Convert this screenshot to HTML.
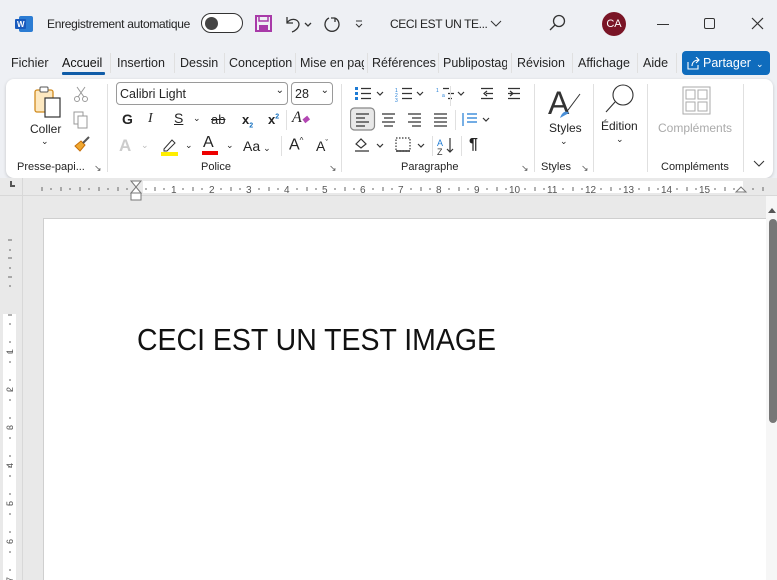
<!DOCTYPE html>
<html><head><meta charset="utf-8"><style>
*{margin:0;padding:0;box-sizing:border-box}
body{width:777px;height:580px;overflow:hidden;background:#eef0f4;font-family:"Liberation Sans",sans-serif;color:#242424;position:relative}
.a{position:absolute;white-space:nowrap}
.t{font-size:12px}
.tab{position:absolute;top:56px;font-size:12.5px;color:#242424;white-space:nowrap}
.sep{position:absolute;width:1px;background:#e0e0e0}
.lbl{position:absolute;top:161px;font-size:11px;color:#242424;white-space:nowrap}
.ic{position:absolute}
</style></head><body>
<!-- title bar -->
<svg class="ic" style="left:15px;top:16px" width="18" height="16"><rect x="4" y="0" width="14" height="16" rx="2" fill="#2b7cd3"/><rect x="0" y="3" width="11" height="10" rx="1" fill="#185abd"/><text x="2" y="11" font-size="8" font-weight="bold" fill="#fff" font-family="Liberation Sans">W</text></svg>
<div class="a t" style="left:47px;top:17px;letter-spacing:-0.3px">Enregistrement automatique</div>
<div class="a" style="left:201px;top:13px;width:42px;height:20px;border:1.5px solid #333;border-radius:10px;background:#fff"><div style="position:absolute;left:3px;top:2.5px;width:13px;height:13px;border-radius:50%;background:#444"></div></div>
<svg class="ic" style="left:255px;top:15px" width="17" height="17"><rect x="1" y="1" width="15" height="15" fill="none" stroke="#a83aa8" stroke-width="2"/><rect x="4" y="1" width="9" height="5" fill="none" stroke="#a83aa8" stroke-width="1.5"/><rect x="4" y="10" width="9" height="6" fill="#a83aa8"/></svg>
<svg class="ic" style="left:283px;top:14px" width="60" height="20" fill="none" stroke="#333" stroke-width="1.3"><path d="M4 3v6h6M4 9c3-5 11-5 12 1c0 4-4 7-7 8"/><path d="M22 9l3 3l3-3"/><path d="M52 4a7 7 0 1 1-6 0M52 4v4M52 4h-4"/></svg>
<svg class="ic" style="left:354px;top:18px" width="10" height="10" stroke="#333" fill="none"><path d="M2 3h6M2 6l3 3l3-3"/></svg>
<div class="a t" style="left:390px;top:17px;letter-spacing:-0.4px">CECI EST UN TE...</div>
<svg class="ic" style="left:490px;top:18px" width="12" height="10" stroke="#333" fill="none"><path d="M1 3l5 5l5-5"/></svg>
<svg class="ic" style="left:549px;top:14px" width="17" height="17" stroke="#333" fill="none" stroke-width="1.3"><circle cx="10" cy="7" r="5.5"/><path d="M6 11l-5 5"/></svg>
<div class="a" style="left:602px;top:12px;width:24px;height:24px;border-radius:50%;background:#7a1526;color:#fff;font-size:11px;text-align:center;line-height:24px">CA</div>
<div class="a" style="left:657px;top:24px;width:12px;height:1px;background:#333"></div>
<div class="a" style="left:704px;top:18px;width:11px;height:11px;border:1.2px solid #333;border-radius:2px"></div>
<svg class="ic" style="left:751px;top:17px" width="13" height="13" stroke="#333" stroke-width="1.2"><path d="M1 1l11 11M12 1l-11 11"/></svg>
<!-- tabs -->
<div class="tab" style="left:11px">Fichier</div>
<div class="tab" style="left:62px;color:#111">Accueil</div>
<div class="a" style="left:62px;top:72px;width:43px;height:3px;background:#0f5ca8;border-radius:1px"></div>
<div class="tab" style="left:117px">Insertion</div>
<div class="tab" style="left:180px">Dessin</div>
<div class="tab" style="left:229px;width:63px;overflow:hidden">Conception</div>
<div class="tab" style="left:300px;width:64px;overflow:hidden">Mise en page</div>
<div class="tab" style="left:372px;width:64px;overflow:hidden">Références</div>
<div class="tab" style="left:443px;width:64px;overflow:hidden">Publipostage</div>
<div class="tab" style="left:517px">Révision</div>
<div class="tab" style="left:578px">Affichage</div>
<div class="tab" style="left:643px">Aide</div>
<div class="sep" style="left:110px;top:53px;height:20px"></div><div class="sep" style="left:174px;top:53px;height:20px"></div><div class="sep" style="left:224px;top:53px;height:20px"></div><div class="sep" style="left:295px;top:53px;height:20px"></div><div class="sep" style="left:367px;top:53px;height:20px"></div><div class="sep" style="left:438px;top:53px;height:20px"></div><div class="sep" style="left:511px;top:53px;height:20px"></div><div class="sep" style="left:572px;top:53px;height:20px"></div><div class="sep" style="left:637px;top:53px;height:20px"></div><div class="sep" style="left:676px;top:53px;height:20px"></div>
<div class="a" style="left:682px;top:51px;width:88px;height:24px;background:#0f6cbd;border-radius:4px;color:#fff;font-size:12.5px;line-height:24px;padding-left:21px">Partager<span style="font-size:9px;margin-left:5px">&#8964;</span></div>
<svg class="ic" style="left:687px;top:57px" width="13" height="13" stroke="#fff" fill="none" stroke-width="1.1"><path d="M1 5v7h10v-4M5 9c0-4 3-6 7-6M9 0l3 3l-3 3"/></svg>
<!-- ribbon -->
<div class="a" style="left:6px;top:79px;width:767px;height:99px;background:#fff;border-radius:8px;box-shadow:0 1px 3px rgba(0,0,0,.18)"></div>
<div class="sep" style="left:107px;top:84px;height:88px"></div><div class="sep" style="left:341px;top:84px;height:88px"></div><div class="sep" style="left:534px;top:84px;height:88px"></div><div class="sep" style="left:593px;top:84px;height:88px"></div><div class="sep" style="left:647px;top:84px;height:88px"></div><div class="sep" style="left:743px;top:84px;height:88px"></div>
<!-- clipboard -->
<svg class="ic" style="left:33px;top:86px" width="30" height="32"><rect x="2" y="4" width="18" height="22" rx="2" fill="#fde8c0" stroke="#d08a1e" stroke-width="1.3"/><rect x="7" y="1" width="8" height="5" rx="1" fill="#fff" stroke="#555"/><rect x="12" y="12" width="15" height="19" fill="#fff" stroke="#333" stroke-width="1.2"/></svg>
<div class="a t" style="left:30px;top:122px">Coller</div>
<div class="a" style="left:41px;top:136px;font-size:9px">&#8964;</div>
<svg class="ic" style="left:73px;top:86px" width="16" height="16" stroke="#999" fill="none"><circle cx="4" cy="13" r="2.5"/><circle cx="12" cy="13" r="2.5"/><path d="M5 11l7-10M11 11l-7-10"/></svg>
<svg class="ic" style="left:73px;top:111px" width="16" height="18" stroke="#999" fill="none"><rect x="1" y="1" width="9" height="12"/><rect x="5" y="5" width="9" height="12" fill="#fff"/></svg>
<svg class="ic" style="left:73px;top:136px" width="18" height="16"><path d="M2 10l6-5l4 4l-5 6z" fill="#f0a830" stroke="#c76f0a"/><path d="M10 7l6-6" stroke="#555" stroke-width="2"/></svg>
<div class="lbl" style="left:17px">Presse-papi...</div>
<div class="a" style="left:94px;top:163px;font-size:9px;color:#555">&#8600;</div>
<!-- font -->
<div class="a" style="left:116px;top:82px;width:172px;height:23px;border:1px solid #9a9a9a;border-radius:4px;font-size:12.5px;padding:4px 0 0 3px">Calibri Light<span style="position:absolute;right:3px;top:2px;font-size:10px">&#8964;</span></div>
<div class="a" style="left:291px;top:82px;width:42px;height:23px;border:1px solid #9a9a9a;border-radius:4px;font-size:12.5px;padding:4px 0 0 3px">28<span style="position:absolute;right:3px;top:2px;font-size:10px">&#8964;</span></div>
<div class="a" style="top:111px;left:122px;font-size:14px;font-weight:bold">G</div>
<div class="a" style="top:111px;left:148px;font-size:14px;font-style:italic;font-family:'Liberation Serif',serif">I</div>
<div class="a" style="top:110px;left:174px;font-size:14px;text-decoration:underline">S</div>
<div class="a" style="top:113px;left:193px;font-size:9px">&#8964;</div>
<div class="a" style="top:112px;left:211px;font-size:13px;text-decoration:line-through">ab</div>
<div class="a" style="top:112px;left:242px;font-size:13px;font-weight:bold">x<sub style="font-size:7px;color:#0f6cbd">2</sub></div>
<div class="a" style="top:112px;left:268px;font-size:13px;font-weight:bold">x<sup style="font-size:7px;color:#0f6cbd">2</sup></div>
<div class="sep" style="left:286px;top:110px;height:20px"></div>
<div class="a" style="top:109px;left:292px;font-size:16px;font-family:'Liberation Serif',serif;font-style:italic">A<span style="color:#b347b3;font-size:10px">&#9670;</span></div>
<div class="a" style="top:136px;left:119px;font-size:17px;font-weight:bold;color:#ccc">A</div>
<div class="a" style="top:140px;left:141px;font-size:9px;color:#bbb">&#8964;</div>
<svg class="ic" style="left:160px;top:137px" width="20" height="20"><path d="M4 12l8-9l3 3l-8 8h-3z" fill="none" stroke="#333"/><rect x="1" y="15" width="17" height="4" fill="#ffee00"/></svg>
<div class="a" style="top:140px;left:185px;font-size:9px">&#8964;</div>
<div class="a" style="top:134px;left:203px;font-size:16px">A</div>
<div class="a" style="left:202px;top:151px;width:16px;height:4px;background:#e00"></div>
<div class="a" style="top:140px;left:226px;font-size:9px">&#8964;</div>
<div class="a" style="top:138px;left:243px;font-size:14px">Aa<span style="font-size:9px;margin-left:3px">&#8964;</span></div>
<div class="sep" style="left:281px;top:136px;height:20px"></div>
<div class="a" style="top:136px;left:289px;font-size:16px">A<sup style="font-size:8px">^</sup></div>
<div class="a" style="top:138px;left:316px;font-size:14px">A<sup style="font-size:8px">ˇ</sup></div>
<div class="lbl" style="left:201px">Police</div>
<div class="a" style="left:329px;top:163px;font-size:9px;color:#555">&#8600;</div>
<!-- paragraph -->
<svg class="ic" style="left:350px;top:84px" width="190" height="75" stroke="#333" fill="none" stroke-width="1.2">
<g fill="#1e7bd4" stroke="none"><rect x="5" y="3" width="3" height="3"/><rect x="5" y="8" width="3" height="3"/><rect x="5" y="13" width="3" height="3"/></g>
<path d="M11 4.5h10M11 9.5h10M11 14.5h10"/><path d="M27 8l3 3l3-3"/>
<path d="M52 4.5h10M52 9.5h10M52 14.5h10"/><path d="M67 8l3 3l3-3"/><text x="45" y="8" font-size="5" fill="#1e7bd4" stroke="none">1</text><text x="45" y="13" font-size="5" fill="#1e7bd4" stroke="none">2</text><text x="45" y="18" font-size="5" fill="#1e7bd4" stroke="none">3</text>
<path d="M93 4.5h6M98 9.5h6M98 14.5h4"/><path d="M108 8l3 3l3-3"/><text x="86" y="8" font-size="5" fill="#1e7bd4" stroke="none">1</text><text x="92" y="13" font-size="5" fill="#1e7bd4" stroke="none">a</text>
<path d="M131 4.5h12M136 9.5h7M131 14.5h12M137 7l-3 2.5l3 2.5" /><path d="M158 4.5h12M163 9.5h7M158 14.5h12M158 9.5h5M160 7l3 2.5l-3 2.5"/>
<rect x="0.5" y="24" width="24" height="22" rx="4" fill="#e8e8e8" stroke="#888"/><path d="M6 30h13M6 34h9M6 38h13M6 42h9"/>
<path d="M32 30h13M34 34h9M32 38h13M34 42h9"/><path d="M58 30h13M62 34h9M58 38h13M62 42h9"/><path d="M84 30h13M84 34h13M84 38h13M84 42h13"/>
<path d="M117 30h10M117 34h10M117 38h10M113 29v13" stroke="#1e7bd4"/><path d="M133 34l3 3l3-3"/>
<path d="M5 67h14M6 60l5-5l5 5l-5 4z"/><path d="M27 60l3 3l3-3"/><rect x="46" y="54" width="14" height="13" stroke-dasharray="1.5 1.5"/><path d="M46 67h14" stroke-width="1.5"/><path d="M68 60l3 3l3-3"/>
<text x="87" y="62" font-size="9" fill="#1e7bd4" stroke="none">A</text><text x="87" y="71" font-size="9" fill="#333" stroke="none">Z</text><path d="M100 54v14M97 65l3 3l3-3"/></svg>
<div class="sep" style="left:450px;top:86px;height:20px"></div>
<div class="sep" style="left:455px;top:110px;height:20px"></div>
<div class="sep" style="left:432px;top:136px;height:20px"></div>
<div class="sep" style="left:461px;top:136px;height:20px"></div>
<div class="a" style="left:469px;top:136px;font-size:16px;font-weight:bold">¶</div>
<div class="lbl" style="left:401px">Paragraphe</div>
<div class="a" style="left:521px;top:163px;font-size:9px;color:#555">&#8600;</div>
<!-- styles -->
<svg class="ic" style="left:548px;top:86px" width="36" height="34"><text x="0" y="28" font-size="32" font-family="Liberation Sans" fill="#333">A</text><path d="M14 30l6-6l12-16" stroke="#333" fill="none"/><path d="M12 32c2-6 6-8 9-5z" fill="#4a90d9"/></svg>
<div class="a t" style="left:549px;top:121px">Styles</div>
<div class="a" style="left:560px;top:136px;font-size:9px">&#8964;</div>
<div class="lbl" style="left:541px">Styles</div>
<div class="a" style="left:581px;top:163px;font-size:9px;color:#555">&#8600;</div>
<svg class="ic" style="left:602px;top:83px" width="36" height="32" stroke="#333" fill="none" stroke-width="1.1"><circle cx="21" cy="12" r="10"/><path d="M13 19l-9 10"/></svg>
<div class="a t" style="left:601px;top:119px">Édition</div>
<div class="a" style="left:616px;top:134px;font-size:9px">&#8964;</div>
<svg class="ic" style="left:682px;top:86px" width="29" height="29" stroke="#aaa" fill="none"><rect x="1" y="1" width="27" height="27"/><rect x="4" y="4" width="9" height="9"/><rect x="16" y="4" width="9" height="9"/><rect x="4" y="16" width="9" height="9"/><rect x="16" y="16" width="9" height="9"/></svg>
<div class="a t" style="left:658px;top:121px;color:#aaa">Compléments</div>
<div class="lbl" style="left:661px">Compléments</div>
<svg class="ic" style="left:753px;top:159px" width="12" height="9" stroke="#333" fill="none"><path d="M1 2l5 5l5-5"/></svg>
<!-- ruler -->
<div class="a" style="left:0;top:178px;width:777px;height:402px;background:#e9e9e9"></div>
<div class="a" style="left:22px;top:178px;width:1px;height:402px;background:#d8d8d8"></div>
<div class="a" style="left:0;top:195px;width:777px;height:1px;background:#d8d8d8"></div>
<div class="a" style="left:143px;top:181px;width:600px;height:12px;background:#fff"></div>
<div class="a" style="left:10px;top:181px;width:5px;height:6px;border-left:2px solid #555;border-bottom:2px solid #555"></div>
<svg class="ic" style="left:30px;top:180px" width="740" height="24" font-size="10" fill="#555" font-family="Liberation Sans">
<g stroke="#666">
<path d="M12 7v4M21 8v2M31 7v4M40 8v2M50 7v4M59 8v2M69 7v4M78 8v2M88 7v4M97 8v2M116 8v2M125 7v4M134 8v2M153 8v2M163 7v4M172 8v2M191 8v2M201 7v4M210 8v2M229 8v2M239 7v4M248 8v2M267 8v2M277 7v4M286 8v2M305 8v2M315 7v4M324 8v2M343 8v2M353 7v4M362 8v2M381 8v2M391 7v4M400 8v2M419 8v2M429 7v4M438 8v2M457 8v2M467 7v4M476 8v2M495 8v2M505 7v4M514 8v2M533 8v2M543 7v4M552 8v2M571 8v2M581 7v4M590 8v2M609 8v2M619 7v4M628 8v2M647 8v2M657 7v4M666 8v2M685 8v2M695 7v4M704 8v2M723 8v2M733 7v4"/></g>
<text x="141" y="13">1</text><text x="179" y="13">2</text><text x="216" y="13">3</text><text x="254" y="13">4</text><text x="292" y="13">5</text><text x="330" y="13">6</text><text x="368" y="13">7</text><text x="406" y="13">8</text><text x="444" y="13">9</text><text x="479" y="13">10</text><text x="517" y="13">11</text><text x="555" y="13">12</text><text x="593" y="13">13</text><text x="631" y="13">14</text><text x="669" y="13">15</text>
<path d="M101 1h10l-5 6zM101 13l5-6l5 6zM101 13h10v7h-10z" fill="#fff" stroke="#777"/>
<path d="M706 12l5-5l5 5z" fill="#fff" stroke="#777"/></svg>
<!-- vertical ruler -->
<div class="a" style="left:3px;top:314px;width:13px;height:266px;background:#fff"></div>
<svg class="ic" style="left:0;top:230px" width="20" height="350" font-size="9" fill="#555" font-family="Liberation Sans"><g stroke="#666"><path d="M8 10h4M9 20h2M8 28h4M9 38h2M8 47h4M9 56h2M8 85h4M9 94h2M9 112h2M8 123h4M9 132h2M9 150h2M8 161h4M9 170h2M9 188h2M8 199h4M9 208h2M9 226h2M8 237h4M9 246h2M9 264h2M8 275h4M9 284h2M9 302h2M8 313h4M9 322h2M9 340h2"/></g>
<g transform="rotate(-90)"><text x="-124" y="13">1</text><text x="-162" y="13">2</text><text x="-200" y="13">3</text><text x="-238" y="13">4</text><text x="-276" y="13">5</text><text x="-314" y="13">6</text><text x="-352" y="13">7</text></g></svg>
<!-- page -->
<div class="a" style="left:43px;top:218px;width:724px;height:362px;background:#fff;border:1px solid #cfcfcf;border-right:none;border-bottom:none"></div>
<svg class="ic" style="left:130px;top:315px" width="400" height="50"><text x="7" y="35" font-size="31" font-family="Liberation Sans" fill="#111" textLength="359" lengthAdjust="spacingAndGlyphs">CECI EST UN TEST IMAGE</text></svg>
<!-- scrollbar -->
<div class="a" style="left:766px;top:196px;width:11px;height:384px;background:#f6f6f6"></div>
<svg class="ic" style="left:767px;top:206px" width="10" height="8"><path d="M1 7l4-5l4 5z" fill="#555"/></svg>
<div class="a" style="left:769px;top:219px;width:8px;height:204px;background:#777;border-radius:4px"></div>
</body></html>
